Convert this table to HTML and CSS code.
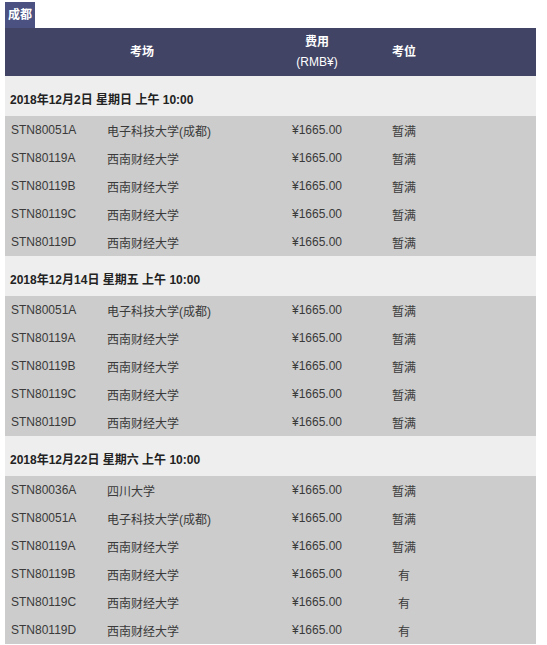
FILE: index.html
```html
<!DOCTYPE html>
<html lang="zh">
<head>
<meta charset="utf-8">
<link rel="stylesheet" href="styles.css">
</head>
<body>
<div class="wrap">
  <div class="tab">成都</div>
  <table class="sched">
    <colgroup>
      <col class="c-code"><col class="c-name"><col class="c-price"><col class="c-seat"><col class="c-rest">
    </colgroup>
    <thead>
      <tr class="head">
        <th colspan="2">考场</th>
        <th>费用<br><span class="unit">(RMB¥)</span></th>
        <th>考位</th>
        <th></th>
      </tr>
    </thead>
    <tbody>
      <tr class="date"><td colspan="5">2018年12月2日 星期日 上午 10:00</td></tr>
      <tr><td>STN80051A</td><td>电子科技大学(成都)</td><td class="ctr">¥1665.00</td><td class="ctr">暂满</td><td></td></tr>
      <tr><td>STN80119A</td><td>西南财经大学</td><td class="ctr">¥1665.00</td><td class="ctr">暂满</td><td></td></tr>
      <tr><td>STN80119B</td><td>西南财经大学</td><td class="ctr">¥1665.00</td><td class="ctr">暂满</td><td></td></tr>
      <tr><td>STN80119C</td><td>西南财经大学</td><td class="ctr">¥1665.00</td><td class="ctr">暂满</td><td></td></tr>
      <tr><td>STN80119D</td><td>西南财经大学</td><td class="ctr">¥1665.00</td><td class="ctr">暂满</td><td></td></tr>
      <tr class="date"><td colspan="5">2018年12月14日 星期五 上午 10:00</td></tr>
      <tr><td>STN80051A</td><td>电子科技大学(成都)</td><td class="ctr">¥1665.00</td><td class="ctr">暂满</td><td></td></tr>
      <tr><td>STN80119A</td><td>西南财经大学</td><td class="ctr">¥1665.00</td><td class="ctr">暂满</td><td></td></tr>
      <tr><td>STN80119B</td><td>西南财经大学</td><td class="ctr">¥1665.00</td><td class="ctr">暂满</td><td></td></tr>
      <tr><td>STN80119C</td><td>西南财经大学</td><td class="ctr">¥1665.00</td><td class="ctr">暂满</td><td></td></tr>
      <tr><td>STN80119D</td><td>西南财经大学</td><td class="ctr">¥1665.00</td><td class="ctr">暂满</td><td></td></tr>
      <tr class="date"><td colspan="5">2018年12月22日 星期六 上午 10:00</td></tr>
      <tr><td>STN80036A</td><td>四川大学</td><td class="ctr">¥1665.00</td><td class="ctr">暂满</td><td></td></tr>
      <tr><td>STN80051A</td><td>电子科技大学(成都)</td><td class="ctr">¥1665.00</td><td class="ctr">暂满</td><td></td></tr>
      <tr><td>STN80119A</td><td>西南财经大学</td><td class="ctr">¥1665.00</td><td class="ctr">暂满</td><td></td></tr>
      <tr><td>STN80119B</td><td>西南财经大学</td><td class="ctr">¥1665.00</td><td class="ctr">有</td><td></td></tr>
      <tr><td>STN80119C</td><td>西南财经大学</td><td class="ctr">¥1665.00</td><td class="ctr">有</td><td></td></tr>
      <tr><td>STN80119D</td><td>西南财经大学</td><td class="ctr">¥1665.00</td><td class="ctr">有</td><td></td></tr>
    </tbody>
  </table>
</div>
</body>
</html>
```
FILE: styles.css
```css
html, body { margin: 0; padding: 0; background: #fff; }
body {
  font-family: "Liberation Sans", Arial, "Noto Sans CJK SC", sans-serif;
  font-size: 12px;
  color: #333;
}
.wrap { padding: 2px 11px 0 5px; }
.tab {
  display: inline-block;
  background: #4b5282;
  color: #fff;
  font-weight: bold;
  line-height: 26px;
  height: 26px;
  padding: 0 3px;
}
.sched {
  width: 531px;
  border-collapse: collapse;
  table-layout: fixed;
}
.c-code { width: 96px; }
.c-name { width: 178px; }
.c-price { width: 76px; }
.c-seat { width: 98px; }
.c-rest { width: 83px; }
.sched td, .sched th { padding: 0; }
.head th {
  background: #414464;
  color: #fff;
  font-weight: bold;
  height: 48px;
  line-height: 20px;
  text-align: center;
  vertical-align: middle;
}
.head .unit { font-weight: normal; }
.date td {
  background: #eeeeee;
  color: #222;
  font-weight: bold;
  height: 40px;
  padding: 4px 0 0 5px;
  box-sizing: border-box;
  vertical-align: middle;
}
tbody tr:not(.date) td {
  background: #cccccc;
  height: 28px;
  padding: 0 0 0 6px;
  box-sizing: border-box;
  vertical-align: middle;
  color: #3a3a3a;
}
tbody tr:not(.date) td.ctr { text-align: center; padding-left: 0; }
```
